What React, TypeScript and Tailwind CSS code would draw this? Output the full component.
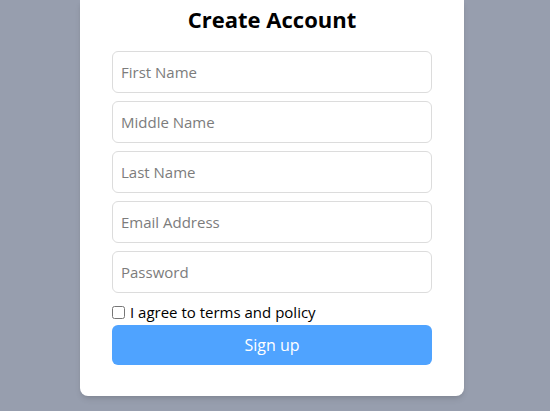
import { useState } from 'react';

const fields = ['First Name', 'Middle Name', 'Last Name', 'Email Address', 'Password'];

export default function App() {
    const [agree, setAgree] = useState(false);

    return (
        <div className="w-[550px] h-[411px] overflow-hidden bg-[#979eae] flex justify-center" style={{ fontFamily: '"Open Sans", "Noto Sans", sans-serif' }}>
            <div className="w-[384px] h-[396px] mr-[6px] bg-white rounded-b-lg shadow-md px-8 pt-[3px] flex flex-col">
                <h2 className="text-[22px] leading-8 font-bold text-black text-center mb-4">Create Account</h2>
                {fields.map(f => (
                    <input key={f} type={f === 'Password' ? 'password' : 'text'} placeholder={f}
                        className="w-full h-[42px] mb-2 px-2 border border-[#dcdcdc] rounded-md text-[15px] text-gray-800 placeholder:text-[#7c7c7c] outline-none" />
                ))}
                <label className="flex items-center gap-[5px] text-[15px] leading-[22px] text-black">
                    <input type="checkbox" checked={agree} onChange={e => setAgree(e.target.checked)} className="w-[13px] h-[13px] m-0" />
                    I agree to terms and policy
                </label>
                <button className="w-full h-10 mt-[2px] bg-[#4fa3ff] text-white text-[16px] rounded-md">Sign up</button>
            </div>
        </div>
    );
}
